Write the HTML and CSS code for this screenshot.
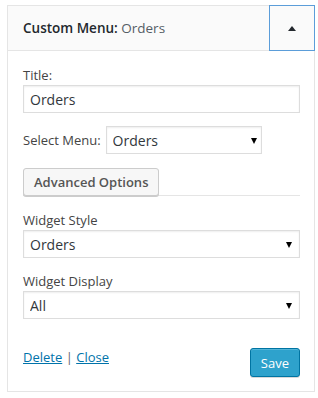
FILE: index.html
```html
<!DOCTYPE html>
<html lang="en">
<head>
    <meta charset="UTF-8">
    <meta name="viewport" content="width=device-width, initial-scale=1.0">
    <title>Custom Menu Widget</title>
    <link rel="stylesheet" href="styles.css">
</head>
<body>
    <div class="widget">
        <div class="widget-top">
            <div class="widget-title">Custom Menu:<span class="in-title"> Orders</span></div>
            <button class="widget-toggle" aria-label="Collapse"><span class="arrow-up"></span></button>
        </div>

        <div class="widget-inside">
            <label class="field-label" for="title">Title:</label>
            <input class="text-input" id="title" type="text" value="Orders">

            <div class="menu-row">
                <label class="field-label" for="nav_menu">Select Menu:</label>
                <div class="select-wrap small">
                    <select id="nav_menu" class="select-input">
                        <option>Orders</option>
                    </select>
                </div>
            </div>

            <div class="advanced-row">
                <button class="advanced-btn">Advanced Options</button>
            </div>

            <label class="field-label" for="style">Widget Style</label>
            <div class="select-wrap">
                <select id="style" class="select-input">
                    <option>Orders</option>
                </select>
            </div>

            <label class="field-label spaced" for="display">Widget Display</label>
            <div class="select-wrap">
                <select id="display" class="select-input">
                    <option>All</option>
                </select>
            </div>

            <div class="widget-control-actions">
                <div class="links">
                    <a href="#">Delete</a> <span class="sep">|</span> <a href="#">Close</a>
                </div>
                <button class="save-btn">Save</button>
            </div>
        </div>
    </div>
</body>
</html>
```

FILE: styles.css
```css
body {
    margin: 0;
    background-color: #fff;
    font-family: 'Open Sans', sans-serif;
    font-size: 13px;
    color: #444;
}
.widget {
    width: 308px;
    box-sizing: border-box;
    margin: 5px 0 0 7px;
    border: 1px solid #e5e5e5;
    background: #fff;
}
.widget-top {
    display: flex;
    height: 44px;
    background: #fafafa;
    border-bottom: 1px solid #e5e5e5;
}
.widget-title {
    flex-grow: 1;
    padding: 0 15px;
    line-height: 44px;
    font-size: 13.5px;
    font-weight: 600;
    color: #23282d;
}
.in-title {
    font-weight: 400;
    color: #555d66;
}
.widget-toggle {
    width: 46px;
    height: 46px;
    box-sizing: border-box;
    margin: -1px -1px -1px 0;
    padding: 0;
    border: 1px solid #5b9dd9;
    background: transparent;
    display: flex;
    align-items: center;
    justify-content: center;
}
.arrow-up {
    width: 0;
    height: 0;
    border-left: 4px solid transparent;
    border-right: 4px solid transparent;
    border-bottom: 5px solid #23282d;
}
.widget-inside {
    padding: 15px 14px 14px 15px;
}
.field-label {
    display: block;
    line-height: 19px;
    color: #444;
}
.field-label.spaced {
    margin-top: 14px;
}
.text-input {
    display: block;
    width: 100%;
    height: 28px;
    box-sizing: border-box;
    margin: 0;
    padding: 0 6px;
    border: 1px solid #ddd;
    box-shadow: inset 0 1px 2px rgba(0, 0, 0, 0.07);
    font-family: 'Open Sans', sans-serif;
    font-size: 14px;
    color: #32373c;
}
.menu-row {
    display: flex;
    align-items: center;
    gap: 5px;
    margin-top: 13px;
}
.menu-row .field-label {
    display: inline;
}
.select-wrap {
    position: relative;
    height: 28px;
}
.select-wrap.small {
    width: 156px;
}
.select-wrap::after {
    content: "";
    position: absolute;
    right: 8px;
    top: 12px;
    border-left: 3.5px solid transparent;
    border-right: 3.5px solid transparent;
    border-top: 6px solid #000;
    pointer-events: none;
}
.select-wrap.small::after {
    right: 5px;
}
.select-input {
    -webkit-appearance: none;
    appearance: none;
    width: 100%;
    height: 28px;
    box-sizing: border-box;
    margin: 0;
    padding: 0 6px;
    border: 1px solid #ddd;
    border-radius: 0;
    background: #fff;
    box-shadow: inset 0 1px 2px rgba(0, 0, 0, 0.07);
    font-family: 'Open Sans', sans-serif;
    font-size: 14px;
    color: #32373c;
}
.advanced-row {
    display: flex;
    margin-top: 14px;
    border-bottom: 1px solid #e5e5e5;
}
.advanced-btn {
    height: 28px;
    padding: 0 10px;
    margin-bottom: -1px;
    border: 1px solid #ccc;
    border-radius: 3px;
    background: #f7f7f7;
    box-shadow: 0 1px 0 #ccc;
    font-family: 'Open Sans', sans-serif;
    font-size: 13px;
    font-weight: 600;
    color: #555;
}
.advanced-row + .field-label {
    margin-top: 15px;
}
.widget-control-actions {
    display: flex;
    justify-content: space-between;
    align-items: flex-start;
    margin-top: 29px;
}
.links {
    line-height: 19px;
    color: #666;
}
.links a {
    color: #0073aa;
    text-decoration: underline;
}
.save-btn {
    height: 29px;
    padding: 0 10px;
    border: 1px solid #0074a2;
    border-radius: 3px;
    background: #2ea2cc;
    box-shadow: inset 0 1px 0 rgba(120, 200, 230, 0.5), 0 1px 0 rgba(0, 0, 0, 0.15);
    font-family: 'Open Sans', sans-serif;
    font-size: 13px;
    color: #fff;
}
```
